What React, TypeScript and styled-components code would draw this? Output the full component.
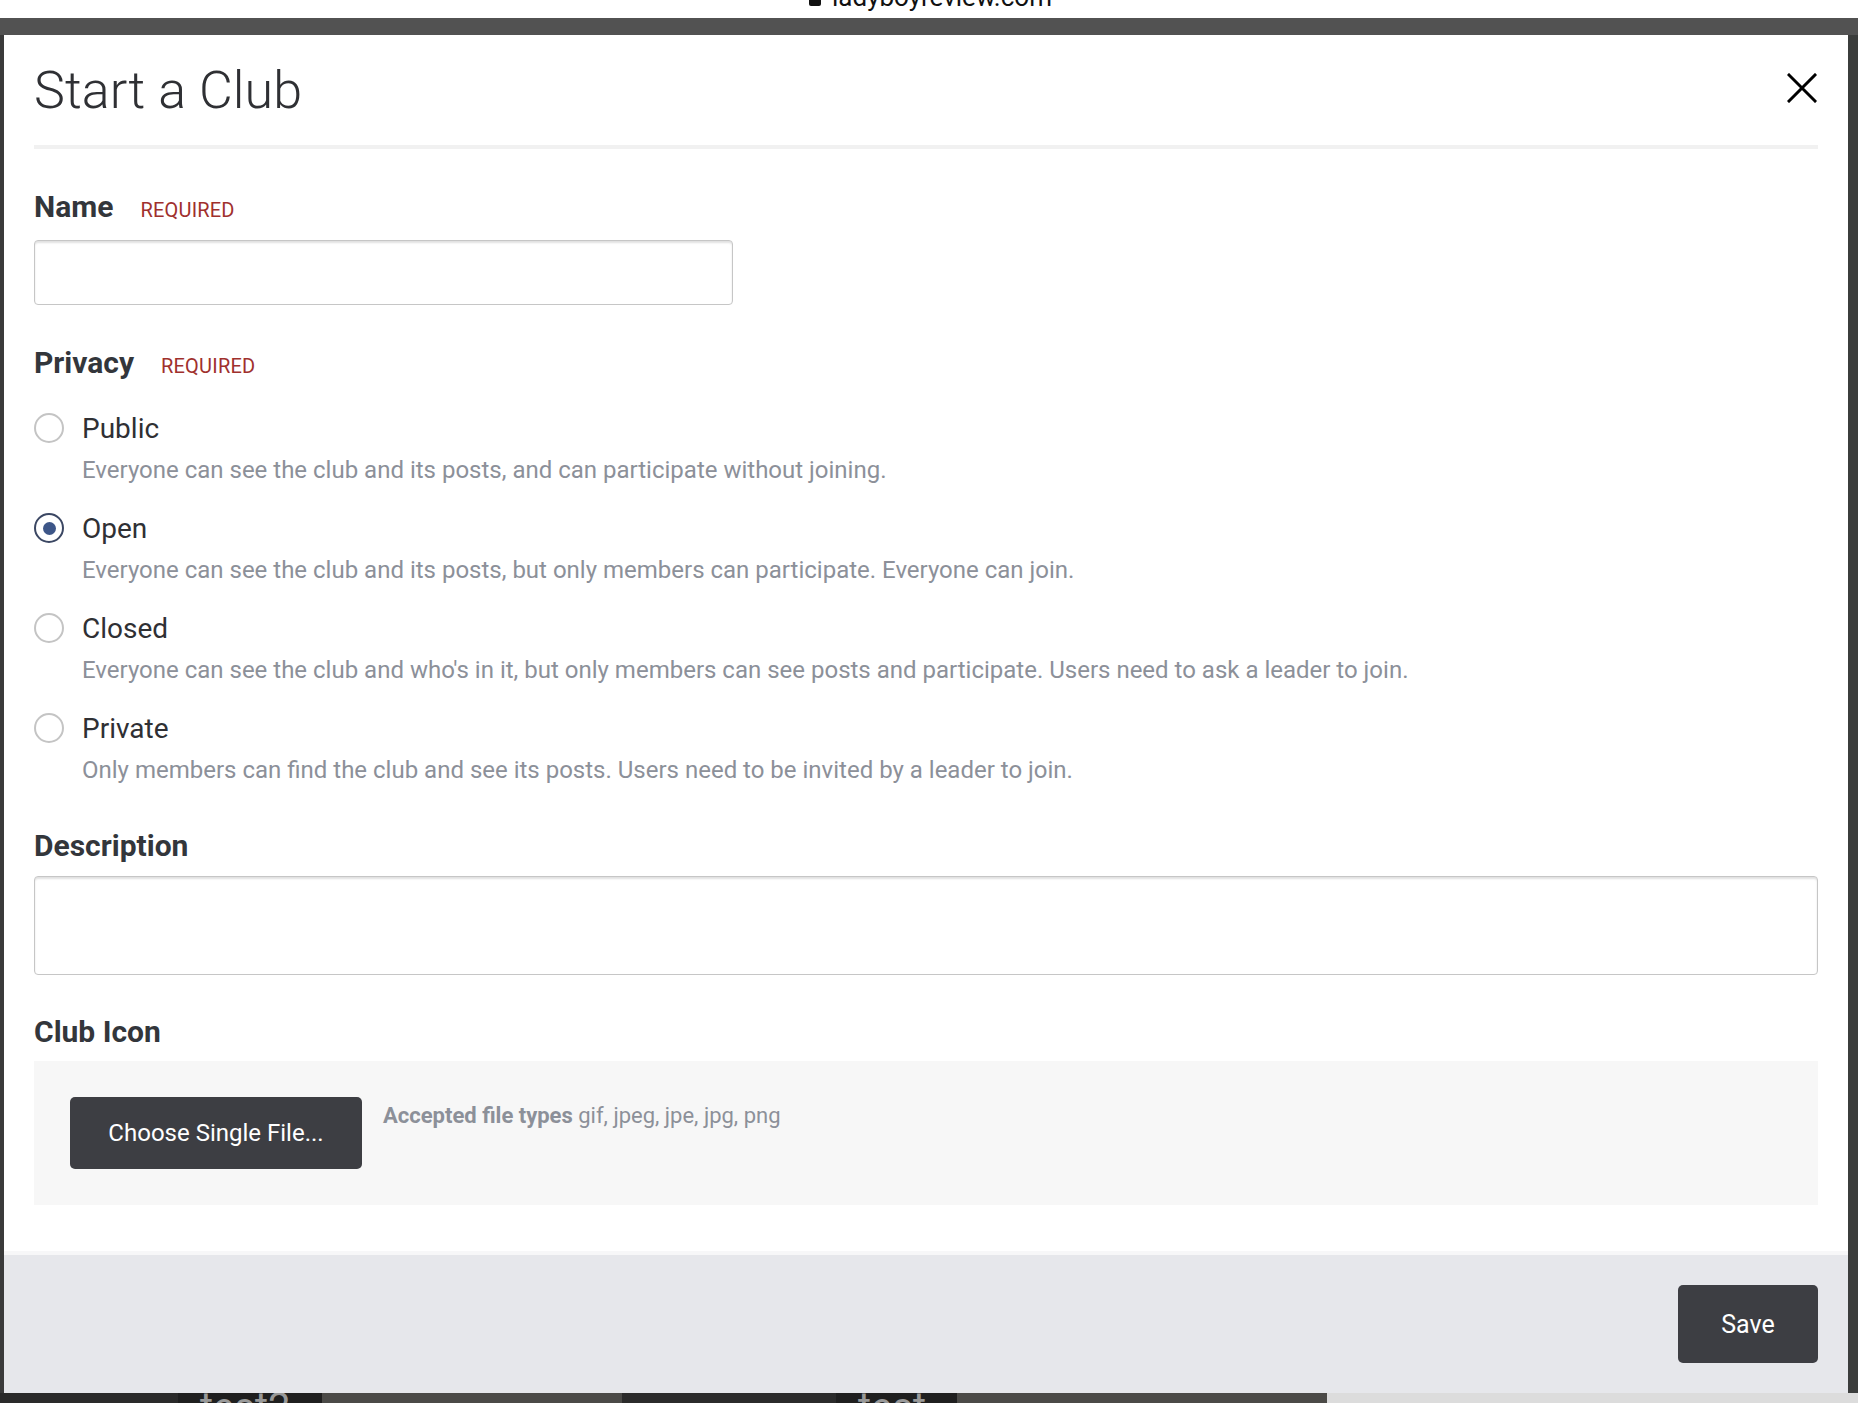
import { useState } from "react";
import styled, { createGlobalStyle } from "styled-components";

const GlobalStyle = createGlobalStyle`
  html, body {
    margin: 0;
    padding: 0;
    width: 1858px;
    height: 1403px;
    overflow: hidden;
    background: #525252;
    font-family: Roboto, "Liberation Sans", Arial, sans-serif;
  }
  * { box-sizing: border-box; }
`;

const Page = styled.div`
  display: flex;
  flex-direction: column;
  width: 1858px;
  height: 1403px;
`;

const UrlBar = styled.div`
  height: 18px;
  background: #fff;
  overflow: hidden;
  display: flex;
  justify-content: center;
`;

const UrlText = styled.div`
  display: flex;
  align-items: center;
  gap: 10px;
  margin-top: -24px;
  margin-left: 2px;
  font-size: 26px;
  color: #111;
  line-height: 30px;
`;

const Backdrop = styled.div`
  flex: 1;
  display: flex;
  flex-direction: column;
  background: #525252;
  padding-top: 17px;
  overflow: hidden;
`;

const ModalRow = styled.div`
  display: flex;
`;

const Gutter = styled.div<{ $w: number; $bg: string }>`
  width: ${(p) => p.$w}px;
  flex-shrink: 0;
  background: ${(p) => p.$bg};
`;

const Modal = styled.div`
  width: 1844px;
  height: 1358px;
  background: #fff;
  display: flex;
  flex-direction: column;
`;

const Header = styled.div`
  padding: 0 30px;
`;

const TitleRow = styled.div`
  height: 110px;
  display: flex;
  align-items: center;
  justify-content: space-between;
`;

const Title = styled.h1`
  margin: 0;
  font-size: 52px;
  font-weight: 300;
  color: #2f3034;
  letter-spacing: 0.1px;
`;

const CloseButton = styled.button`
  border: none;
  background: none;
  padding: 0;
  width: 32px;
  height: 32px;
  margin-top: -4px;
  display: flex;
  align-items: center;
  justify-content: center;
  cursor: pointer;
`;

const Divider = styled.div`
  height: 4px;
  background: #f1f1f1;
`;

const Body = styled.div`
  flex: 1;
  padding: 40px 30px 0;
  display: flex;
  flex-direction: column;
`;

const LabelRow = styled.div<{ $mt?: number }>`
  display: flex;
  align-items: baseline;
  gap: 27px;
  line-height: 36px;
  margin-top: ${(p) => p.$mt ?? 0}px;
`;

const Label = styled.label`
  font-size: 30px;
  font-weight: 700;
  color: #33363b;
`;

const Required = styled.span`
  font-size: 20px;
  color: #a0302d;
  letter-spacing: 0.2px;
`;

const TextInput = styled.input`
  margin-top: 12px;
  width: 699px;
  height: 65px;
  border: 1px solid #c6c6c6;
  border-radius: 4px;
  box-shadow: inset 0 2px 2px rgba(0, 0, 0, 0.12);
  font-size: 24px;
  padding: 0 14px;
  font-family: inherit;
`;

const TextArea = styled.textarea`
  margin-top: 12px;
  width: 100%;
  height: 99px;
  border: 1px solid #c6c6c6;
  border-radius: 4px;
  box-shadow: inset 0 2px 2px rgba(0, 0, 0, 0.12);
  font-size: 24px;
  padding: 12px 14px;
  resize: none;
  font-family: inherit;
`;

const OptionList = styled.div`
  margin-top: 26px;
  display: flex;
  flex-direction: column;
  gap: 24px;
`;

const Option = styled.div`
  display: flex;
  flex-direction: column;
  gap: 8px;
  cursor: pointer;
`;

const OptionHead = styled.div`
  display: flex;
  align-items: center;
  gap: 18px;
  height: 36px;
`;

const Radio = styled.span<{ $checked: boolean }>`
  width: 30px;
  height: 30px;
  border-radius: 50%;
  border: 2px solid ${(p) => (p.$checked ? "#3b4763" : "#c4c4c4")};
  background: #fff;
  display: flex;
  align-items: center;
  justify-content: center;
  flex-shrink: 0;

  &::after {
    content: "";
    display: ${(p) => (p.$checked ? "block" : "none")};
    width: 13px;
    height: 13px;
    border-radius: 50%;
    background: #3d5688;
  }
`;

const OptionName = styled.span`
  font-size: 28px;
  color: #2f3034;
`;

const OptionDesc = styled.div`
  padding-left: 48px;
  font-size: 24px;
  line-height: 32px;
  color: #8c9099;
`;

const FileArea = styled.div`
  margin-top: 11px;
  background: #f7f7f7;
  padding: 36px;
  display: flex;
  align-items: flex-start;
  gap: 21px;
`;

const DarkButton = styled.button<{ $w: number; $h: number; $fs: number }>`
  width: ${(p) => p.$w}px;
  height: ${(p) => p.$h}px;
  background: #3d3e43;
  color: #fff;
  border: none;
  border-radius: 5px;
  font-family: inherit;
  font-size: ${(p) => p.$fs}px;
  cursor: pointer;
  flex-shrink: 0;
`;

const FileHint = styled.div`
  margin-top: 4px;
  font-size: 22px;
  line-height: 30px;
  color: #8c9099;

  b {
    font-weight: 700;
  }
`;

const Footer = styled.div`
  height: 142px;
  border-top: 4px solid #f7f7f8;
  background: #e6e7eb;
  display: flex;
  justify-content: flex-end;
  align-items: center;
  padding: 0 30px;
`;

const Peek = styled.div`
  flex: 1;
  display: flex;
  overflow: hidden;
`;

const PeekBlock = styled.div<{ $w: number; $bg: string; $fg?: string }>`
  width: ${(p) => p.$w}px;
  flex-shrink: 0;
  background: ${(p) => p.$bg};
  color: ${(p) => p.$fg ?? "transparent"};
  font-size: 40px;
  line-height: 30px;
  padding-left: 22px;
  overflow: hidden;
`;

const options = [
  {
    id: "public",
    name: "Public",
    desc: "Everyone can see the club and its posts, and can participate without joining.",
  },
  {
    id: "open",
    name: "Open",
    desc: "Everyone can see the club and its posts, but only members can participate. Everyone can join.",
  },
  {
    id: "closed",
    name: "Closed",
    desc: "Everyone can see the club and who's in it, but only members can see posts and participate. Users need to ask a leader to join.",
  },
  {
    id: "private",
    name: "Private",
    desc: "Only members can find the club and see its posts. Users need to be invited by a leader to join.",
  },
];

const App = () => {
  const [privacy, setPrivacy] = useState("open");

  return (
    <Page>
      <GlobalStyle />
      <UrlBar>
        <UrlText>
          <svg width="14" height="20" viewBox="0 0 14 20">
            <rect x="1" y="8" width="12" height="11" rx="2" fill="#111" />
            <path d="M3.5 8V5.5a3.5 3.5 0 0 1 7 0V8" stroke="#111" strokeWidth="2" fill="none" />
          </svg>
          ladyboyreview.com
        </UrlText>
      </UrlBar>
      <Backdrop>
        <ModalRow>
          <Gutter $w={4} $bg="#3a3a3a" />
          <Modal>
            <Header>
              <TitleRow>
                <Title>Start a Club</Title>
                <CloseButton aria-label="Close">
                  <svg width="30" height="30" viewBox="0 0 30 30">
                    <path d="M2 2L28 28M28 2L2 28" stroke="#000" strokeWidth="3" strokeLinecap="square" />
                  </svg>
                </CloseButton>
              </TitleRow>
              <Divider />
            </Header>

            <Body>
              <LabelRow>
                <Label>Name</Label>
                <Required>REQUIRED</Required>
              </LabelRow>
              <TextInput type="text" />

              <LabelRow $mt={40}>
                <Label>Privacy</Label>
                <Required>REQUIRED</Required>
              </LabelRow>
              <OptionList>
                {options.map((o) => (
                  <Option key={o.id} onClick={() => setPrivacy(o.id)}>
                    <OptionHead>
                      <Radio $checked={privacy === o.id} />
                      <OptionName>{o.name}</OptionName>
                    </OptionHead>
                    <OptionDesc>{o.desc}</OptionDesc>
                  </Option>
                ))}
              </OptionList>

              <LabelRow $mt={42}>
                <Label>Description</Label>
              </LabelRow>
              <TextArea />

              <LabelRow $mt={39}>
                <Label>Club Icon</Label>
              </LabelRow>
              <FileArea>
                <DarkButton $w={292} $h={72} $fs={24}>Choose Single File...</DarkButton>
                <FileHint>
                  <b>Accepted file types</b> gif, jpeg, jpe, jpg, png
                </FileHint>
              </FileArea>
            </Body>

            <Footer>
              <DarkButton $w={140} $h={78} $fs={25}>Save</DarkButton>
            </Footer>
          </Modal>
          <Gutter $w={10} $bg="#3b3d3c" />
        </ModalRow>
        <Peek>
          <PeekBlock $w={178} $bg="#2a2a2a" />
          <PeekBlock $w={144} $bg="#1f1f1f" $fg="#999">test2</PeekBlock>
          <PeekBlock $w={300} $bg="#4b4a47" />
          <PeekBlock $w={214} $bg="#2b2b2b" />
          <PeekBlock $w={121} $bg="#1f1f1f" $fg="#999">test</PeekBlock>
          <PeekBlock $w={370} $bg="#4b4a47" />
          <PeekBlock $w={531} $bg="#dcdcdc" />
        </Peek>
      </Backdrop>
    </Page>
  );
};

export default App;
